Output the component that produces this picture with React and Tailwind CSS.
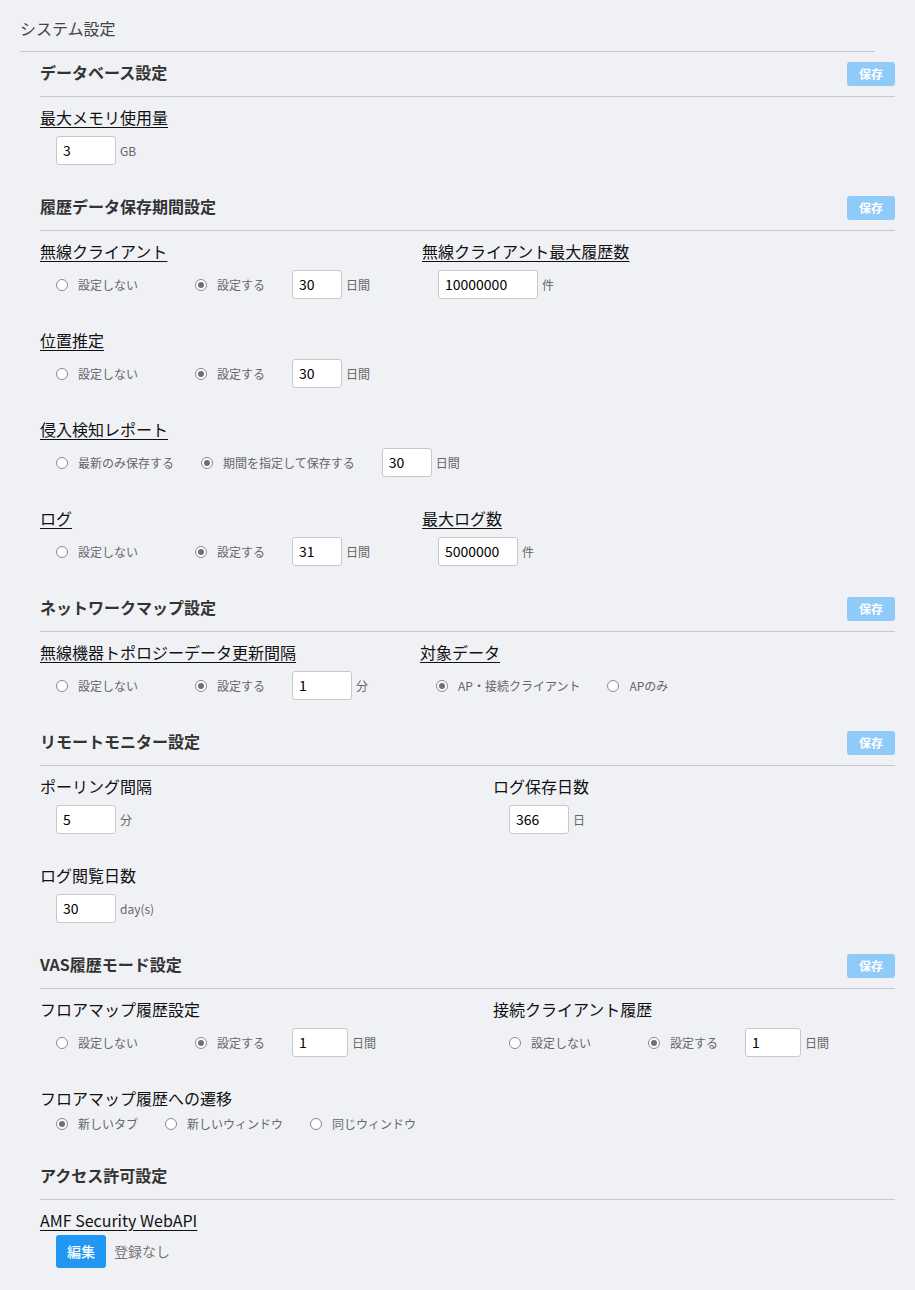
import React from 'react';

const font = { fontFamily: '"Noto Sans CJK JP", "Noto Sans", sans-serif' };

const Radio = ({ checked, label, className = '' }) => (
  <label className={`flex items-center gap-[10px] mr-[27px] text-[12px] text-[#666] leading-none ${className}`}>
    <span className="w-[12px] h-[12px] rounded-full border border-[#8a8a8a] bg-white flex items-center justify-center shrink-0">
      {checked && <span className="w-[6px] h-[6px] rounded-full bg-[#707070]" />}
    </span>
    <span className="whitespace-nowrap">{label}</span>
  </label>
);

const NumInput = ({ value, w = 'w-[50px]' }) => (
  <div className={`${w} h-[29px] bg-white border border-[#c8c8c8] rounded-[3px] flex items-center pl-[6px] text-[14px] text-black`}>
    {value}
  </div>
);

const Unit = ({ children }) => (
  <span className="ml-[4px] text-[12px] text-[#666]">{children}</span>
);

const Label = ({ children, underline = true }) => (
  <div className={`text-[16px] leading-6 text-[#111] ${underline ? 'underline underline-offset-[3px]' : ''}`}>
    {children}
  </div>
);

// section header row is 45px incl. the bottom rule
const Section = ({ title, save = true, children }) => (
  <section className="pb-[21px]">
    <div className="h-[45px] flex items-start justify-between border-b border-[#c8c8cc]">
      <h2 className="pt-[8px] text-[16px] leading-6 font-bold text-[#333]">{title}</h2>
      {save && (
        <button className="w-[48px] h-[24px] mt-[10px] rounded-[3px] bg-[#90caf9] text-white text-[12px] font-bold">
          保存
        </button>
      )}
    </div>
    <div className="pt-[8px]">{children}</div>
  </section>
);

const Row = ({ children, className = '' }) => (
  <div className={`flex items-center h-[29px] mt-[7px] pl-4 ${className}`}>{children}</div>
);

const PeriodRow = ({ noLabel = '設定しない', yesLabel = '設定する', value, unit = '日間', inputW }) => (
  <Row>
    <Radio label={noLabel} className="w-[112px]" />
    <Radio checked label={yesLabel} />
    <NumInput value={value} w={inputW} />
    <Unit>{unit}</Unit>
  </Row>
);

export default function App() {
  return (
    <div className="min-h-screen bg-[#f0f1f5]" style={font}>
      <div className="ml-5 mr-10 pt-4 pb-[11px] border-b border-[#c8c8cc]">
        <h1 className="text-[16px] leading-6 text-[#444]">システム設定</h1>
      </div>

      <div className="pl-10 pr-5">
        <Section title="データベース設定">
          <Label>最大メモリ使用量</Label>
          <Row>
            <NumInput value="3" w="w-[60px]" />
            <Unit>GB</Unit>
          </Row>
        </Section>

        <Section title="履歴データ保存期間設定">
          <div className="flex">
            <div className="w-[382px]">
              <Label>無線クライアント</Label>
              <PeriodRow value="30" />
            </div>
            <div>
              <Label>無線クライアント最大履歴数</Label>
              <Row>
                <NumInput value="10000000" w="w-[100px]" />
                <Unit>件</Unit>
              </Row>
            </div>
          </div>

          <div className="mt-[29px]">
            <Label>位置推定</Label>
            <PeriodRow value="30" />
          </div>

          <div className="mt-[29px]">
            <Label>侵入検知レポート</Label>
            <Row>
              <Radio label="最新のみ保存する" />
              <Radio checked label="期間を指定して保存する" />
              <NumInput value="30" />
              <Unit>日間</Unit>
            </Row>
          </div>

          <div className="mt-[29px] flex">
            <div className="w-[382px]">
              <Label>ログ</Label>
              <PeriodRow value="31" />
            </div>
            <div>
              <Label>最大ログ数</Label>
              <Row>
                <NumInput value="5000000" w="w-[80px]" />
                <Unit>件</Unit>
              </Row>
            </div>
          </div>
        </Section>

        <Section title="ネットワークマップ設定">
          <div className="flex">
            <div className="w-[380px]">
              <Label>無線機器トポロジーデータ更新間隔</Label>
              <PeriodRow value="1" unit="分" inputW="w-[60px]" />
            </div>
            <div>
              <Label>対象データ</Label>
              <Row>
                <Radio checked label="AP・接続クライアント" />
                <Radio label="APのみ" />
              </Row>
            </div>
          </div>
        </Section>

        <Section title="リモートモニター設定">
          <div className="flex">
            <div className="w-[453px]">
              <Label underline={false}>ポーリング間隔</Label>
              <Row>
                <NumInput value="5" w="w-[60px]" />
                <Unit>分</Unit>
              </Row>
            </div>
            <div>
              <Label underline={false}>ログ保存日数</Label>
              <Row>
                <NumInput value="366" w="w-[60px]" />
                <Unit>日</Unit>
              </Row>
            </div>
          </div>
          <div className="mt-[29px]">
            <Label underline={false}>ログ閲覧日数</Label>
            <Row>
              <NumInput value="30" w="w-[60px]" />
              <Unit>day(s)</Unit>
            </Row>
          </div>
        </Section>

        <Section title="VAS履歴モード設定">
          <div className="flex">
            <div className="w-[453px]">
              <Label underline={false}>フロアマップ履歴設定</Label>
              <PeriodRow value="1" inputW="w-[56px]" />
            </div>
            <div>
              <Label underline={false}>接続クライアント履歴</Label>
              <PeriodRow value="1" inputW="w-[56px]" />
            </div>
          </div>
          <div className="mt-[29px]">
            <Label underline={false}>フロアマップ履歴への遷移</Label>
            <div className="flex items-center h-[20px] mt-[4px] pl-4">
              <Radio checked label="新しいタブ" />
              <Radio label="新しいウィンドウ" />
              <Radio label="同じウィンドウ" />
            </div>
          </div>
        </Section>

        <Section title="アクセス許可設定" save={false}>
          <Label>AMF Security WebAPI</Label>
          <div className="flex items-center mt-[3px] pl-4">
            <button className="w-[50px] h-[33px] rounded-[3px] bg-[#2196f3] text-white text-[14px] font-medium">
              編集
            </button>
            <span className="ml-2 text-[14px] text-[#777]">登録なし</span>
          </div>
        </Section>
      </div>
    </div>
  );
}
